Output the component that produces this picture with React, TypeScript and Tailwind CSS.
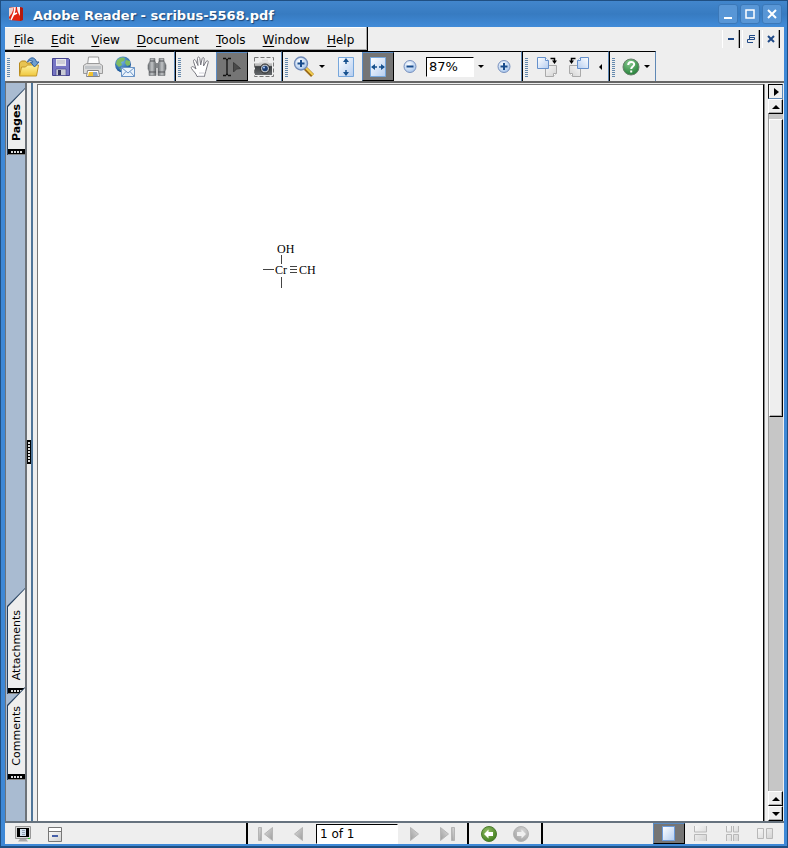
import type { ReactNode } from 'react';
import { clsx } from 'clsx';

const menus = ['File', 'Edit', 'View', 'Document', 'Tools', 'Window', 'Help'];

const Defs = () => (
  <svg className="absolute size-0" aria-hidden>
    <defs>
      <linearGradient id="folder" x1="0" y1="0" x2="0" y2="1">
        <stop offset="0" stopColor="#fff3a0" />
        <stop offset="1" stopColor="#efc73c" />
      </linearGradient>
      <linearGradient id="sheet" x1="0" y1="0" x2="1" y2="1">
        <stop offset="0" stopColor="#ffffff" />
        <stop offset="1" stopColor="#b4cdf0" />
      </linearGradient>
      <linearGradient id="paleSheet" x1="0" y1="0" x2="1" y2="1">
        <stop offset="0" stopColor="#f8f8f8" />
        <stop offset="1" stopColor="#d2d2d2" />
      </linearGradient>
      <linearGradient id="metal" x1="0" y1="0" x2="1" y2="0">
        <stop offset="0" stopColor="#6a6e72" />
        <stop offset="0.5" stopColor="#c0c3c5" />
        <stop offset="1" stopColor="#63676a" />
      </linearGradient>
      <linearGradient id="camera" x1="0" y1="0" x2="0" y2="1">
        <stop offset="0" stopColor="#f0f0f0" />
        <stop offset="0.35" stopColor="#aaaaaa" />
        <stop offset="0.4" stopColor="#3c3f42" />
        <stop offset="1" stopColor="#66696c" />
      </linearGradient>
      <linearGradient id="nav" x1="0" y1="0" x2="1" y2="1">
        <stop offset="0" stopColor="#dedede" />
        <stop offset="1" stopColor="#9c9c9c" />
      </linearGradient>
      <radialGradient id="glass" cx="0.4" cy="0.35" r="0.7">
        <stop offset="0" stopColor="#ffffff" />
        <stop offset="1" stopColor="#9fc0ea" />
      </radialGradient>
      <radialGradient id="globe" cx="0.4" cy="0.3" r="0.75">
        <stop offset="0" stopColor="#7ab8e6" />
        <stop offset="1" stopColor="#0d4a91" />
      </radialGradient>
      <radialGradient id="green" cx="0.4" cy="0.3" r="0.75">
        <stop offset="0" stopColor="#8fbb62" />
        <stop offset="1" stopColor="#3f7d1c" />
      </radialGradient>
      <radialGradient id="help" cx="0.4" cy="0.25" r="0.8">
        <stop offset="0" stopColor="#86c98d" />
        <stop offset="1" stopColor="#1f7c34" />
      </radialGradient>
      <radialGradient id="gray" cx="0.4" cy="0.3" r="0.75">
        <stop offset="0" stopColor="#d5d5d5" />
        <stop offset="1" stopColor="#a3a3a3" />
      </radialGradient>
    </defs>
  </svg>
);

const AdobeIcon = () => (
  <svg width="16" height="16" viewBox="0 0 16 16" aria-hidden>
    <path d="M1 2l3-1h8l3 1v12l-3 1-11-1z" fill="#e2230f" />
    <path d="M12 1l3 1v12l-3 1z" fill="#b3190c" />
    <path d="M1 2l5-1-2 6-3 4z" fill="#efd4d0" />
    <path d="M9 1h3v9C10 7 9 4 9 1z" fill="#fbeeee" />
    <path d="M7 1c0 6-2 9-4 13M5 9l4-2" fill="none" stroke="#fff" strokeWidth="1.500" />
    <path d="M1 12l2 2H1z" fill="#9d9d9d" />
  </svg>
);

const FolderIcon = () => (
  <svg width="22" height="22" viewBox="0 0 22 22" aria-hidden>
    <path d="M1.500 19V7l2-2h4l1.500 2h9v12z" fill="#e8c452" stroke="#b88a1c" />
    <path d="M1.500 20l2-9h4l2-2h11l-2 11z" fill="url(#folder)" stroke="#c5982a" />
    <path d="M9.500 6C11 1 17 0 18.500 6h2.500l-4.500 5-4-5h2.500C14 4 12 4 9.500 6z" fill="#6f9fd0" stroke="#2f62a0" />
  </svg>
);

const SaveIcon = () => (
  <svg width="20" height="20" viewBox="0 0 20 20" aria-hidden>
    <path d="M1.500 1.500h16l1 1v16h-17z" fill="#7776c4" stroke="#45438f" />
    <path d="M5 2h10v7H5z" fill="#e9e9ef" />
    <path d="M6 4h8M6 6h8" stroke="#b5b5c0" />
    <path d="M5 12h10v6.500H5z" fill="#c9cbd6" stroke="#45438f" strokeWidth="0.6" />
    <path d="M7 13h3v5H7z" fill="#34345e" />
  </svg>
);

const PrintIcon = () => (
  <svg width="22" height="22" viewBox="0 0 22 22" aria-hidden>
    <path d="M5.500 9l1-8h10l1 8z" fill="#fdfdfd" stroke="#9a9a9a" />
    <path d="M1.500 9.500l3-2h13l3 2v8h-19z" fill="#dcdcdc" stroke="#9b9b9b" />
    <path d="M3 10h16v3H3z" fill="#c0c4c8" />
    <path d="M5.500 14.500h11l1 6h-13z" fill="#fff" stroke="#848484" />
    <path d="M7 16h4v4H6z" fill="#f2c230" />
    <path d="M11 16h4l1 4h-5z" fill="#86a3cc" />
  </svg>
);

const MailIcon = () => (
  <svg width="22" height="22" viewBox="0 0 22 22" aria-hidden>
    <circle cx="9" cy="8.500" r="8" fill="url(#globe)" />
    <path d="M3 4c3-3 6-3 8-2l-1 3-3 1 1 3-3 2-3-3zM12 4l4 1v4l-3 1-2-3zM5 12l3 1v3z" fill="#7ebb62" />
    <path d="M7.500 11.500h13v9h-13z" fill="#eaf3fc" stroke="#6a94c6" />
    <path d="M7.500 11.500l6.500 5.500 6.500-5.500M7.500 20.500l4.500-5M20.500 20.500l-4.500-5" fill="none" stroke="#6a94c6" />
  </svg>
);

const BinocularsIcon = () => (
  <svg width="20" height="20" viewBox="0 0 20 20" aria-hidden>
    <path d="M3 1.500h5V4l1 3v11.500H2V14l-1-2V8l2-4z" fill="url(#metal)" stroke="#6a6d70" strokeWidth="0.6" />
    <path d="M17 1.500h-5V4l-1 3v11.500h7V14l1-2V8l-2-4z" fill="url(#metal)" stroke="#6a6d70" strokeWidth="0.6" />
    <path d="M8.500 6h3v5h-3z" fill="#85888b" />
    <path d="M3 4h5M12 4h5M2 15h7M11 15h7" stroke="#505356" />
  </svg>
);

const HandIcon = () => (
  <svg width="22" height="22" viewBox="0 0 22 22" aria-hidden>
    <path
      d="M8 20.500C7 17 4 15 2.500 12.500c-1-1.500 1-2.500 2-1.500L7 13 4.500 5.500c-.5-2 1.500-2.500 2.200-1L9 9.500 8.500 2.500c0-2 2-2 2.300 0L11.700 9l1.500-6.500c.5-1.500 2.300-1 2 .7L14.500 10l2.700-4.500c1-1.500 2.500-.5 2 1-1 3-1.500 6-2.500 9-.5 2-1.200 3.500-1.200 5z"
      fill="#fff"
      stroke="#77777f"
    />
    <path d="M9 20h6M10 17h5" stroke="#d0d0d8" />
  </svg>
);

const SelectIcon = () => (
  <svg width="20" height="20" viewBox="0 0 20 20" aria-hidden>
    <path d="M1 1.500h3M6 1.500h3M1 18.500h3M6 18.500h3M4 2.500h2M4 17.500h2M5 3v14" stroke="#111" strokeWidth="1.300" fill="none" />
    <path d="M11.500 5.500l7 6-4 .5-3 3z" fill="#4a4a4a" stroke="#3c3c3c" />
  </svg>
);

const SnapshotIcon = () => (
  <svg width="22" height="22" viewBox="0 0 22 22" aria-hidden>
    <path d="M1.500 1.500h19v19h-19z" fill="none" stroke="#777" strokeDasharray="4 2" />
    <path d="M2 7h4l1-2h8l1 2h3v12H2z" fill="url(#camera)" />
    <path d="M9 3.500h6v2H9z" fill="#ddd" />
    <circle cx="12" cy="12.500" r="4.500" fill="#b9bfc6" stroke="#222" />
    <circle cx="12" cy="12.500" r="2.800" fill="#1d3d70" />
    <circle cx="11" cy="11.500" r="1" fill="#a8ccff" />
  </svg>
);

const ZoomIcon = () => (
  <svg width="22" height="22" viewBox="0 0 22 22" aria-hidden>
    <path d="M12 12l7.500 7.500" stroke="#9a6918" strokeWidth="4" />
    <path d="M12.500 11.500l7.500 7.500" stroke="#f3cf52" strokeWidth="2" />
    <circle cx="8" cy="7.500" r="6.500" fill="url(#glass)" stroke="#718bb8" strokeWidth="1.400" />
    <path d="M8 4v7M4.500 7.500h7" stroke="#174b8c" strokeWidth="2" />
  </svg>
);

const FitHeightIcon = () => (
  <svg width="18" height="22" viewBox="0 0 18 22" aria-hidden>
    <path d="M1.500 1.500h15v19h-15z" fill="url(#sheet)" stroke="#77a7dc" />
    <path d="M9 3v5M9 14v5" stroke="#17518e" strokeWidth="1.500" />
    <path d="M9 2l3 4H6zM9 20l3-4H6z" fill="#17518e" />
  </svg>
);

const FitWidthIcon = () => (
  <svg width="18" height="22" viewBox="0 0 18 22" aria-hidden>
    <path d="M1.500 1.500h15v19h-15z" fill="url(#sheet)" stroke="#77a7dc" />
    <path d="M3 11h5M10 11h5" stroke="#17518e" strokeWidth="1.500" />
    <path d="M2 11l4-3v6zM16 11l-4-3v6z" fill="#17518e" />
  </svg>
);

const ZoomStepIcon = ({ plus = false }: { plus?: boolean }) => (
  <svg width="16" height="16" viewBox="0 0 16 16" aria-hidden>
    <circle cx="8" cy="7.500" r="6" fill="url(#glass)" stroke="#7991be" />
    <path d={plus ? 'M4.500 7.500h7M8 4v7' : 'M4.500 7.500h7'} stroke="#174b8c" strokeWidth="2" />
  </svg>
);

const RotateIcon = ({ left = false }: { left?: boolean }) => (
  <svg width="22" height="22" viewBox="0 0 22 22" aria-hidden className={clsx(left && '-scale-x-100')}>
    <path d="M9.500 9.500h11v8l-3 3h-8z" fill="url(#paleSheet)" stroke="#aaa" />
    <path d="M20.500 17.500h-3v3" fill="#fff" stroke="#aaa" />
    <path d="M1.500 1.500h8l3 3v8h-11z" fill="url(#sheet)" stroke="#6691cc" />
    <path d="M9.500 1.500v3h3" fill="#fff" stroke="#6691cc" />
    <path d="M14.500 2.500h4V5" fill="none" stroke="#000" strokeWidth="1.500" />
    <path d="M16 4.500h5L18.500 8z" />
  </svg>
);

const HelpIcon = () => (
  <svg width="18" height="18" viewBox="0 0 18 18" aria-hidden>
    <circle cx="9" cy="9" r="8" fill="url(#help)" stroke="#68806b" />
    <path d="M6.200 7c0-4 6-4 6-.7C12.200 8.500 9.200 8.500 9.200 11" fill="none" stroke="#fff" strokeWidth="2" />
    <path d="M8.200 12.500h2v2h-2z" fill="#fff" />
  </svg>
);

const Triangle = ({ dir }: { dir: 'up' | 'down' | 'right' }) => {
  const paths = {
    up: 'M4 2l4 4H0z',
    down: 'M4 6L0 2h8z',
    right: 'M7 4L2 0v8z',
  };
  return (
    <svg width="8" height="8" viewBox="0 0 8 8" aria-hidden>
      <path d={paths[dir]} />
    </svg>
  );
};

const CaretIcon = ({ left = false }: { left?: boolean }) => (
  <svg width="6" height="6" viewBox="0 0 6 6" aria-hidden>
    <path d={left ? 'M1 3l3-3v6z' : 'M0 1h6L3 4z'} />
  </svg>
);

const NavIcon = ({ kind }: { kind: 'first' | 'prev' | 'next' | 'last' }) => (
  <svg
    width="16"
    height="16"
    viewBox="0 0 16 16"
    aria-hidden
    className={clsx((kind === 'next' || kind === 'last') && '-scale-x-100')}
  >
    {(kind === 'first' || kind === 'last') && (
      <path d="M.5 1.500h3v13h-3z" fill="url(#nav)" stroke="#b5b5b5" />
    )}
    <path
      d={kind === 'first' || kind === 'last' ? 'M14.500 1.500v13L6.500 8z' : 'M12.500 1.500v13L4.500 8z'}
      fill="url(#nav)"
      stroke="#b5b5b5"
    />
  </svg>
);

const RoundArrowIcon = ({ disabled = false }: { disabled?: boolean }) => (
  <svg width="18" height="18" viewBox="0 0 18 18" aria-hidden className={clsx(disabled && '-scale-x-100')}>
    <circle cx="9" cy="9" r="7.500" fill={disabled ? 'url(#gray)' : 'url(#green)'} stroke={disabled ? '#b4b4b4' : '#4b7a30'} />
    <path d="M4 9l4.500-4.500V7H13v4H8.500v2.500z" fill={disabled ? '#f0f0f0' : '#fff'} />
  </svg>
);

const MonitorIcon = () => (
  <svg width="16" height="16" viewBox="0 0 16 16" aria-hidden>
    <path d="M.5.500h15v12H.5z" fill="#d9d9d9" stroke="#999" />
    <path d="M2 2h12v9H2z" />
    <path d="M5 3h6v7H5z" fill="#d4e2ef" />
    <path d="M7 4.500h3M7 6.500h3M7 8.500h3" stroke="#94a4b5" />
    <path d="M13 12h2v1h-2z" fill="#3c3" />
    <path d="M5 13h6l2 2.500H3z" fill="#aaa" />
  </svg>
);

const CollapseIcon = () => (
  <svg width="14" height="16" viewBox="0 0 14 16" aria-hidden>
    <path d="M.5 1.500h13v14H.5z" fill="#fff" stroke="#777" />
    <path d="M1 6h12v9H1z" fill="url(#paleSheet)" />
    <path d="M0 5.500h14" stroke="#777" />
    <path d="M4 9h6v2H4z" fill="#465fa8" />
  </svg>
);

const LayoutIcon = ({ kind }: { kind: 'single' | 'continuous' | 'grid' | 'facing' }) => {
  const pages = {
    single: 'M2.500 1.500h12v14h-12z',
    continuous: 'M2.500 1v6h12V1M2.500 16V9.500h12V16',
    grid: 'M2.500 1v6h5V1M9.500 1v6h5V1M2.500 16V9.500h5V16M9.500 16V9.500h5V16',
    facing: 'M1.500 3.500h6v10h-6zM10.500 3.500h6v10h-6z',
  };
  return (
    <svg width="18" height="17" viewBox="0 0 18 17" aria-hidden>
      <path
        d={pages[kind]}
        fill={kind === 'single' ? 'url(#sheet)' : 'url(#paleSheet)'}
        stroke={kind === 'single' ? '#6b9bdc' : '#b8b8b8'}
      />
    </svg>
  );
};

const ToolButton = ({ label, active, children }: { label: string; active?: boolean; children: ReactNode }) => (
  <button
    type="button"
    aria-label={label}
    aria-pressed={active}
    className={clsx(
      'flex h-full w-8 shrink-0 items-center justify-center',
      active && 'border border-t-[#5b8cc4] border-r-black border-b-black border-l-[#5b8cc4] bg-[#757575]',
    )}
  >
    {children}
  </button>
);

const ToolGroup = ({ children }: { children: ReactNode }) => (
  <div className="flex border-t border-r border-l border-t-black border-r-[#5f88b5] border-l-black pr-px pl-[2px] first:border-l-0">
    <span className="mt-[6px] mr-[2px] mb-1 w-1 shrink-0 border-r border-[#eee] bg-[repeating-linear-gradient(#6489ad_0_1px,#eee_1px_2px)]" />
    {children}
  </div>
);

const WindowButton = ({ label, children }: { label: string; children: ReactNode }) => (
  <button
    type="button"
    aria-label={label}
    className="flex size-5 items-center justify-center rounded-[3px] border border-[#3b78b8] bg-[#5896d6]"
  >
    <svg width="12" height="12" viewBox="0 0 12 12" fill="none" stroke="#fff" strokeWidth="2" aria-hidden>
      {children}
    </svg>
  </button>
);

const ChildButton = ({ label, children }: { label: string; children: ReactNode }) => (
  <button
    type="button"
    aria-label={label}
    className="flex h-[18px] w-[18px] items-center justify-center border-r border-l border-r-black border-l-white shadow-[inset_-1px_0_#aaa]"
  >
    <svg width="8" height="8" viewBox="0 0 8 8" fill="none" stroke="#204a87" aria-hidden>
      {children}
    </svg>
  </button>
);

const SideTab = ({ label, className }: { label: string; className: string }) => (
  <button
    type="button"
    className={clsx(
      'ml-px flex w-[18px] shrink-0 bg-[#25405f] pt-px pl-px [clip-path:polygon(100%_0,100%_100%,0_100%,0_18px)]',
      className,
    )}
  >
    <span className="flex h-full w-full flex-col items-center justify-end bg-[#eee] [clip-path:polygon(100%_0,100%_100%,0_100%,0_18px)]">
      <span className="mb-2 rotate-180 text-[11px] leading-4 [writing-mode:vertical-rl]">{label}</span>
      <span className="flex h-[6px] w-full items-center justify-center gap-px border-b border-[#888] bg-black">
        {[0, 1, 2, 3].map((dot) => (
          <span key={dot} className="size-[2px] bg-[#ddd]" />
        ))}
      </span>
    </span>
  </button>
);

const ScrollButton = ({ dir, label }: { dir: 'up' | 'down' | 'right'; label: string }) => (
  <button
    type="button"
    aria-label={label}
    className={clsx(
      'flex h-[15px] w-full shrink-0 items-center justify-center border bg-[#eee]',
      dir === 'right'
        ? 'border-t-black border-r-[#5f88b5] border-b-[#5f88b5] border-l-black'
        : 'border-t-white border-r-black border-b-black border-l-white shadow-[inset_-1px_-1px_#aaa]',
    )}
  >
    <Triangle dir={dir} />
  </button>
);

const Molecule = () => (
  <svg
    width="56"
    height="46"
    viewBox="0 0 56 46"
    className="mt-[158px] ml-[224px] font-['Liberation_Serif',serif] text-[12px]"
    role="img"
    aria-label="Structural formula"
  >
    <text x="15" y="10">OH</text>
    <text x="13" y="31">Cr</text>
    <text x="37" y="31">CH</text>
    <path d="M19.500 12v9M19.500 34v11M1 26.500h11M28 23.500h7M28 26.500h7M28 29.500h7" stroke="#444" fill="none" />
  </svg>
);

const App = () => (
  <div className="flex h-screen w-full flex-col overflow-hidden border-t border-r border-b-2 border-l border-[#1f4f82] bg-[#3e88d6] font-['DejaVu_Sans',sans-serif] text-[13px] text-black">
    <Defs />

    <header className="flex h-[26px] shrink-0 items-center bg-linear-to-b from-[#4286cc] via-[#377bc1] to-[#418bd8] pr-[5px] pl-[7px]">
      <AdobeIcon />
      <h1 className="ml-[9px] flex-1 truncate pt-[3px] text-[13px] font-bold text-white [text-shadow:1px_1px_1px_#1c4474]">
        Adobe Reader - scribus-5568.pdf
      </h1>
      <div className="flex gap-[2px]">
        <WindowButton label="Minimize">
          <path d="M2 10h8" />
        </WindowButton>
        <WindowButton label="Maximize">
          <path d="M2 2h8v8H2z" strokeWidth="1.500" />
        </WindowButton>
        <WindowButton label="Close">
          <path d="M2 2l8 8M10 2l-8 8" />
        </WindowButton>
      </div>
    </header>

    <div className="mr-[3px] mb-[2px] ml-1 flex min-h-0 flex-1 flex-col bg-[#eee]">
      <div className="flex shrink-0 justify-between">
        <nav className="flex h-6 items-center gap-px border-r border-b border-black pr-[5px] pl-px text-[12px] shadow-[inset_-1px_-1px_#aaa,inset_0_1px_#fff]">
          {menus.map((menu) => (
            <button key={menu} type="button" className="px-2 pt-[2px] leading-5">
              <span className="underline underline-offset-2">{menu[0]}</span>
              {menu.slice(1)}
            </button>
          ))}
        </nav>
        <div className="mr-1 flex items-center gap-[2px]">
          <ChildButton label="Minimize document">
            <path d="M1 4h6" strokeWidth="2" />
          </ChildButton>
          <ChildButton label="Restore document">
            <path d="M2.500 4.500v-4H8M3 2.500h4.500v2H.5v3H6" />
          </ChildButton>
          <ChildButton label="Close document">
            <path d="M1 1l6 6M7 1L1 7" strokeWidth="2" />
          </ChildButton>
        </div>
      </div>

      <div className="flex h-[30px] shrink-0">
        <ToolGroup>
          <ToolButton label="Open"><FolderIcon /></ToolButton>
          <ToolButton label="Save"><SaveIcon /></ToolButton>
          <ToolButton label="Print"><PrintIcon /></ToolButton>
          <ToolButton label="Email"><MailIcon /></ToolButton>
          <ToolButton label="Search"><BinocularsIcon /></ToolButton>
        </ToolGroup>
        <ToolGroup>
          <ToolButton label="Hand tool"><HandIcon /></ToolButton>
          <ToolButton label="Select tool" active><SelectIcon /></ToolButton>
          <ToolButton label="Snapshot tool"><SnapshotIcon /></ToolButton>
        </ToolGroup>
        <ToolGroup>
          <button type="button" aria-label="Zoom in tool" className="flex w-[26px] items-center justify-center"><ZoomIcon /></button>
          <button type="button" aria-label="Zoom tools" className="mr-[3px] flex w-[10px] items-center justify-center"><CaretIcon /></button>
          <ToolButton label="Fit page"><FitHeightIcon /></ToolButton>
          <ToolButton label="Fit width" active><FitWidthIcon /></ToolButton>
          <ToolButton label="Zoom out"><ZoomStepIcon /></ToolButton>
          <input
            aria-label="Zoom level"
            defaultValue="87%"
            className="my-auto h-5 w-12 border border-t-black border-r-white border-b-white border-l-black bg-white px-[2px] outline-none"
          />
          <button type="button" aria-label="Zoom levels" className="flex w-[14px] items-center justify-center"><CaretIcon /></button>
          <ToolButton label="Zoom in"><ZoomStepIcon plus /></ToolButton>
        </ToolGroup>
        <ToolGroup>
          <ToolButton label="Rotate clockwise"><RotateIcon /></ToolButton>
          <ToolButton label="Rotate counterclockwise"><RotateIcon left /></ToolButton>
          <button type="button" aria-label="More tools" className="flex w-3 items-center justify-center"><CaretIcon left /></button>
        </ToolGroup>
        <ToolGroup>
          <button type="button" aria-label="Help" className="flex w-[26px] items-center justify-center"><HelpIcon /></button>
          <button type="button" aria-label="Help topics" className="flex w-[10px] items-center"><CaretIcon /></button>
        </ToolGroup>
      </div>

      <main className="flex min-h-0 flex-1 border-t-2 border-b-2 border-t-[#666] border-b-[#66727e]">
        <aside className="flex w-[22px] shrink-0 flex-col border-r-2 border-l border-r-[#6d7278] border-l-[#6d7278] bg-[#a9bbd1]">
          <SideTab label="Pages" className="mt-[5px] h-[67px] font-bold" />
          <div className="flex-1" />
          <SideTab label="Attachments" className="h-[106px]" />
          <SideTab label="Comments" className="mb-[41px] -mt-[7px] h-[93px]" />
        </aside>
        <div className="flex w-[6px] shrink-0 items-center border-r-2 border-[#4f7599]">
          <div className="flex h-6 w-1 flex-col items-center justify-between bg-black py-[2px]">
            {[0, 1, 2, 3, 4, 5, 6].map((dot) => (
              <span key={dot} className="size-[2px] bg-[#ddd]" />
            ))}
          </div>
        </div>
        <section className="mt-px mr-1 ml-1 flex-1 border-t border-r border-l border-t-[#777] border-r-black border-l-[#777] bg-white shadow-[1px_0_#888]">
          <Molecule />
        </section>
        <div className="mt-px flex w-4 shrink-0 flex-col pr-px">
          <ScrollButton dir="right" label="Show panel" />
          <ScrollButton dir="up" label="Scroll up" />
          <div className="flex min-h-0 flex-1 flex-col border-l border-[#999] bg-[#c6c6c6] pt-[5px]">
            <div className="h-[44.3%] border border-t-white border-r-black border-b-black border-l-white bg-[#eee] shadow-[inset_-1px_-1px_#aaa]" />
          </div>
          <ScrollButton dir="up" label="Previous line" />
          <ScrollButton dir="down" label="Next line" />
        </div>
      </main>

      <footer className="flex h-[21px] shrink-0">
        <div className="flex w-[243px] shrink-0 border-r-2 border-black pl-[2px]">
          <ToolButton label="Full screen"><MonitorIcon /></ToolButton>
          <ToolButton label="Hide toolbars"><CollapseIcon /></ToolButton>
        </div>
        <div className="flex items-center border-r-2 border-black pr-1 pl-[2px]">
          <ToolButton label="First page"><NavIcon kind="first" /></ToolButton>
          <ToolButton label="Previous page"><NavIcon kind="prev" /></ToolButton>
          <input
            aria-label="Page"
            defaultValue="1 of 1"
            className="mr-px ml-[2px] h-5 w-[82px] border border-t-black border-r-white border-b-white border-l-black bg-white px-[3px] text-[12px] outline-none"
          />
          <ToolButton label="Next page"><NavIcon kind="next" /></ToolButton>
          <ToolButton label="Last page"><NavIcon kind="last" /></ToolButton>
        </div>
        <div className="flex border-r-2 border-black px-1">
          <ToolButton label="Previous view"><RoundArrowIcon /></ToolButton>
          <ToolButton label="Next view"><RoundArrowIcon disabled /></ToolButton>
        </div>
        <div className="mr-[3px] ml-auto flex">
          <ToolButton label="Single page" active><LayoutIcon kind="single" /></ToolButton>
          <ToolButton label="Continuous"><LayoutIcon kind="continuous" /></ToolButton>
          <ToolButton label="Continuous facing"><LayoutIcon kind="grid" /></ToolButton>
          <ToolButton label="Facing"><LayoutIcon kind="facing" /></ToolButton>
        </div>
      </footer>
    </div>
  </div>
);

export default App;
